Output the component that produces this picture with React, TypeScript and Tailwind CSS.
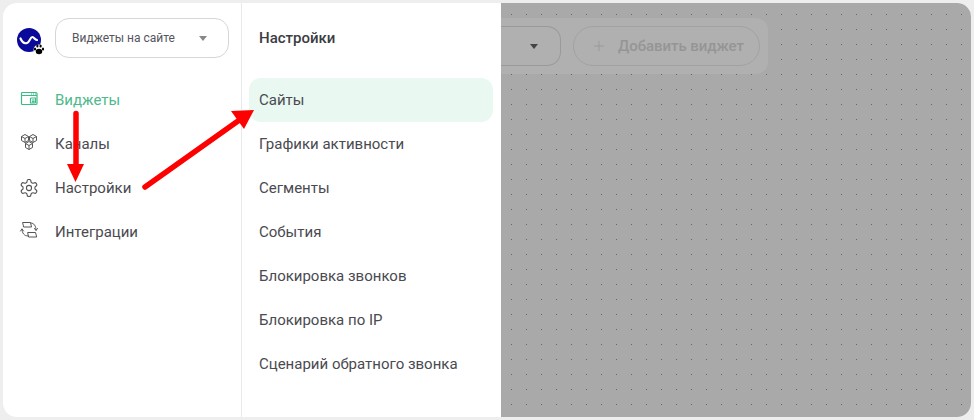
import { Plus } from 'lucide-react';

const navItems = ['Виджеты', 'Каналы', 'Настройки', 'Интеграции'];
const subItems = [
  'Сайты',
  'Графики активности',
  'Сегменты',
  'События',
  'Блокировка звонков',
  'Блокировка по IP',
  'Сценарий обратного звонка',
];

function Logo() {
  return (
    <svg width="28" height="28" viewBox="0 0 28 28" className="shrink-0">
      <circle cx="12" cy="12" r="12" fill="#0a0a9a" />
      <path d="M3.5 10.5C5 14 7 16 10 15s3-6 5.5-6c1.5 0 2 2.5 4.5 3" fill="none" stroke="#fff" strokeWidth="2.2" strokeLinecap="round" />
      <circle cx="22" cy="22" r="5.5" fill="#fff" />
      <ellipse cx="22" cy="23.5" rx="3.2" ry="2.8" fill="#000" />
      <ellipse cx="18" cy="21" rx="1.1" ry="1.6" fill="#000" />
      <ellipse cx="20.4" cy="18" rx="1.1" ry="1.6" fill="#000" />
      <ellipse cx="23.6" cy="18" rx="1.1" ry="1.6" fill="#000" />
      <ellipse cx="26" cy="21" rx="1.1" ry="1.6" fill="#000" />
    </svg>
  );
}

function WidgetsIcon() {
  return (
    <svg width="18" height="18" viewBox="0 0 18 18" fill="none" stroke="#3dba85" strokeWidth="1.2">
      <rect x="1.5" y="1.5" width="15.5" height="12" rx="1" />
      <path d="M1.5 4.5h15.5M10.5 7h5v5M10.5 7v5h5M12 9h2.5M12 10.7h2.5M11 3h1M13 3h1M15 3h1" />
    </svg>
  );
}

function ChannelsIcon() {
  return (
    <svg width="18" height="18" viewBox="0 1 18 18" fill="none" stroke="#555" strokeWidth="1" strokeLinejoin="round" className="overflow-visible">
      <path d="M5 .5l3.500 2v4L5 8.500l-3.500-2v-4zM1.500 2.500L5 4.500l3.500-2M5 4.500v4" />
      <path d="M13 .5l3.500 2v4L13 8.500l-3.500-2v-4zM9.500 2.500L13 4.500l3.500-2M13 4.500v4" />
      <path d="M9 7.500l3.500 2v4L9 15.500l-3.500-2v-4zM5.500 9.500L9 11.500l3.500-2M9 11.500v4" fill="#fff" />
    </svg>
  );
}

function SettingsIcon() {
  return (
    <svg width="18" height="18" viewBox="1.5 1.5 21 21" fill="none" stroke="#555" strokeWidth="1.3" strokeLinecap="round" strokeLinejoin="round">
      <path d="M12.22 2h-.44a2 2 0 0 0-2 2v.18a2 2 0 0 1-1 1.73l-.43.25a2 2 0 0 1-2 0l-.15-.08a2 2 0 0 0-2.73.73l-.22.38a2 2 0 0 0 .73 2.73l.15.1a2 2 0 0 1 1 1.72v.51a2 2 0 0 1-1 1.74l-.15.09a2 2 0 0 0-.73 2.73l.22.38a2 2 0 0 0 2.73.73l.15-.08a2 2 0 0 1 2 0l.43.25a2 2 0 0 1 1 1.73V20a2 2 0 0 0 2 2h.44a2 2 0 0 0 2-2v-.18a2 2 0 0 1 1-1.73l.43-.25a2 2 0 0 1 2 0l.15.08a2 2 0 0 0 2.73-.73l.22-.39a2 2 0 0 0-.73-2.73l-.15-.08a2 2 0 0 1-1-1.74v-.5a2 2 0 0 1 1-1.74l.15-.09a2 2 0 0 0 .73-2.73l-.22-.38a2 2 0 0 0-2.73-.73l-.15.08a2 2 0 0 1-2 0l-.43-.25a2 2 0 0 1-1-1.73V4a2 2 0 0 0-2-2z" />
      <circle cx="12" cy="12" r="3" />
    </svg>
  );
}

function IntegrationsIcon() {
  return (
    <svg width="18" height="18" viewBox="0 2 18 18" fill="none" stroke="#555" strokeWidth="1" strokeLinecap="round" strokeLinejoin="round" className="overflow-visible">
      <path d="M3 1.5h7.500l1 4.500H4z" />
      <path d="M8 11.500h7.500l1.200 4.500H9z" />
      <path d="M11 2c3 0 5 3 5 7M14.500 7.500L16 9.500l1.500-2" />
      <path d="M8 15c-4 0-6-3-6-7M.5 10L2 8l1.500 2" />
    </svg>
  );
}

const navIcons = [WidgetsIcon, ChannelsIcon, SettingsIcon, IntegrationsIcon];

function Arrows() {
  return (
    <svg className="absolute inset-0 pointer-events-none" width="974" height="420" viewBox="0 0 974 420">
      <path d="M76 113.5V166" stroke="#ff0000" strokeWidth="5.5" strokeLinecap="round" />
      <polygon points="67,164 84,164 75.5,182" fill="#ff0000" />
      <path d="M145 187L238 121" stroke="#ff0000" strokeWidth="5.5" strokeLinecap="round" />
      <polygon points="231,111 244,129 254,110" fill="#ff0000" />
    </svg>
  );
}

export default function App() {
  return (
    <div className="relative w-[974px] h-[420px] bg-[#eeeeee] p-[3px] font-['Roboto',sans-serif] overflow-hidden">
      <div className="flex h-[414px] w-[968px] rounded-[14px] overflow-hidden bg-white">
        <aside className="w-[239px] shrink-0 border-r border-[#e6ebe9] pl-[14px] pr-[12px] pt-[15px]">
          <div className="flex items-center gap-[10px] h-[40px]">
            <div className="pt-[8px]"><Logo /></div>
            <div className="flex-1 h-[40px] rounded-[14px] border border-[#d6d6d6] flex items-center justify-between pl-[16px] pr-[21px] text-[12px] text-[#555560]">
              <span>Виджеты на сайте</span>
              <span className="w-0 h-0 border-x-[4px] border-x-transparent border-t-[5px] border-t-[#888888]" />
            </div>
          </div>
          <nav className="mt-[20px] flex flex-col">
            {navItems.map((item, i) => {
              const Icon = navIcons[i];
              return (
                <div key={item} className="flex items-center h-[44px] pl-[3px]">
                  <span className="w-[35px] shrink-0 flex"><Icon /></span>
                  <span className={i === 0 ? 'text-[15px] text-[#4fb98b]' : 'text-[15px] text-[#4a4a50]'}>{item}</span>
                </div>
              );
            })}
          </nav>
        </aside>

        <section className="w-[259px] shrink-0 pl-[7px] pr-[8px] pt-[15px]">
          <h2 className="h-[40px] flex items-center pl-[10px] text-[15px] font-medium text-[#3c3c42]">Настройки</h2>
          <ul className="mt-[20px] flex flex-col">
            {subItems.map((item, i) => (
              <li
                key={item}
                className={i === 0
                  ? 'h-[44px] flex items-center pl-[10px] rounded-[12px] bg-[#e9f8f1] text-[15px] text-[#4a4a50]'
                  : 'h-[44px] flex items-center pl-[10px] text-[15px] text-[#4a4a50]'}
              >
                {item}
              </li>
            ))}
          </ul>
        </section>

        <main className="flex-1 bg-[#a9a9a9] bg-[radial-gradient(circle,#666666_0.7px,transparent_1px)] bg-size-[15px_15px] bg-position-[3px_4px] pt-[15px]">
          <div className="flex items-center gap-[12px] h-[56px] w-[267px] bg-[#b0b0b0] rounded-r-[12px] pr-[8px]">
            <div className="w-[60px] h-[40px] border-y border-r border-[#9a9a9a] rounded-r-[14px] flex items-center justify-end pr-[22px]">
              <span className="w-0 h-0 border-x-[4px] border-x-transparent border-t-[5px] border-t-[#444444]" />
            </div>
            <div className="flex-1 h-[40px] border border-[#a2a2a2] rounded-full flex items-center pl-[17px] gap-[11px] text-[15px] font-medium tracking-[-0.05px] text-[#959595]">
              <Plus size={16} strokeWidth={1.5} className="text-[#9a9a9a]" />
              <span>Добавить виджет</span>
            </div>
          </div>
        </main>
      </div>
      <Arrows />
    </div>
  );
}
